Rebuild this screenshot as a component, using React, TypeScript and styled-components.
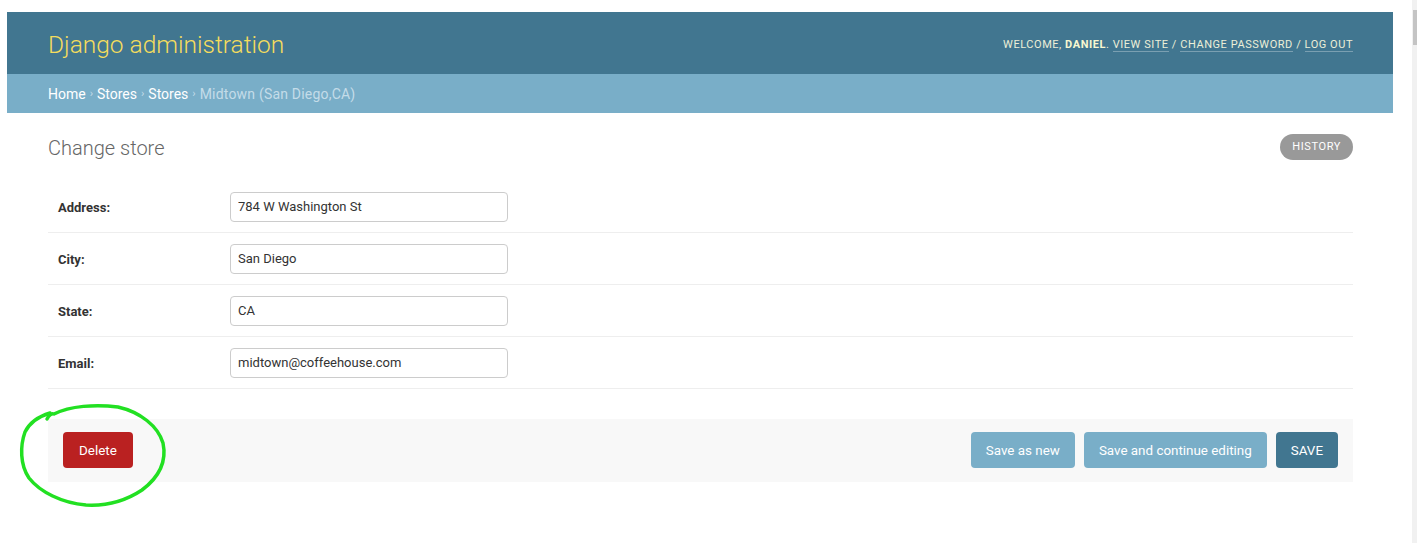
import React from "react";
import styled, { createGlobalStyle } from "styled-components";

const Global = createGlobalStyle`
  html, body { margin: 0; padding: 0; background: #fff; }
  body { font-family: Roboto, "Liberation Sans", Arial, sans-serif; color: #333; }
  * { box-sizing: border-box; }
`;

const Root = styled.div`
  position: relative;
  display: flex;
  width: 1417px;
  height: 543px;
  overflow: hidden;
  background: #fff;
`;

const Page = styled.div`
  width: 1386px;
  margin: 12px 0 0 7px;
  display: flex;
  flex-direction: column;
`;

const Spacer = styled.div`
  flex: 1;
`;

const ScrollTrack = styled.div`
  width: 5px;
  height: 100%;
  background: #f1f1f1;
  display: flex;
  flex-direction: column;
  align-items: flex-end;
  padding-top: 10px;
`;

const ScrollThumb = styled.div`
  width: 4px;
  height: 35px;
  background: #c4c4c4;
`;

const Header = styled.header`
  height: 62px;
  background: #417690;
  display: flex;
  align-items: center;
  justify-content: space-between;
  padding: 0 40px 0 41px;
`;

const Branding = styled.h1`
  margin: 0;
  font-size: 24.5px;
  font-weight: 300;
  color: #f5dd5d;
  padding-top: 2px;
`;

const UserTools = styled.div`
  font-size: 11px;
  letter-spacing: 0.55px;
  text-transform: uppercase;
  color: #ecefd8;
  padding-top: 2px;
`;

const UserName = styled.strong`
  font-weight: 700;
  color: #f8f8d0;
`;

const ToolLink = styled.a`
  color: #ecefd8;
  text-decoration: none;
  border-bottom: 1px solid rgba(255, 255, 255, 0.3);
`;

const Breadcrumbs = styled.nav`
  height: 39px;
  background: #79aec8;
  display: flex;
  align-items: center;
  padding: 0 41px;
  font-size: 14px;
  color: #c4dce8;
`;

const Crumb = styled.a`
  color: #fff;
  text-decoration: none;
`;

const Sep = styled.span`
  color: #c4dce8;
  margin: 0 4px;
  font-size: 11px;
`;

const Current = styled.span`
  color: #c4dce8;
  letter-spacing: 0.2px;
`;

const Content = styled.main`
  padding: 22px 40px 0 41px;
  display: flex;
  flex-direction: column;
`;

const TitleRow = styled.div`
  display: flex;
  justify-content: space-between;
  align-items: flex-start;
  margin-bottom: 20px;
`;

const Title = styled.h2`
  margin: 0;
  font-size: 20px;
  font-weight: 300;
  color: #666;
  line-height: 26px;
`;

const HistoryButton = styled.a`
  display: inline-block;
  height: 26px;
  line-height: 26px;
  padding: 0 12px;
  border-radius: 15px;
  background: #999;
  color: #fff;
  font-size: 11px;
  font-weight: 400;
  letter-spacing: 0.6px;
  text-transform: uppercase;
  margin-top: -1px;
`;

const Fieldset = styled.div`
  display: flex;
  flex-direction: column;
`;

const FormRow = styled.div`
  display: flex;
  align-items: center;
  height: 52px;
  padding: 0 10px;
  border-bottom: 1px solid #eee;
`;

const Label = styled.label`
  width: 172px;
  font-size: 13px;
  font-weight: 700;
  color: #333;
  padding-top: 1px;
`;

const Input = styled.input`
  width: 278px;
  height: 30px;
  padding: 5px 7px;
  border: 1px solid #ccc;
  border-radius: 4px;
  font-family: Roboto, "Liberation Sans", Arial, sans-serif;
  font-size: 13px;
  color: #333;
  background: #fff;
  outline: none;
`;

const SubmitRow = styled.div`
  margin-top: 30px;
  height: 63px;
  background: #f8f8f8;
  display: flex;
  align-items: center;
  padding: 0 15px;
  gap: 9px;
`;

const Button = styled.button<{ $variant: "delete" | "secondary" | "primary" }>`
  height: 36px;
  padding: 0 ${(p) => (p.$variant === "delete" ? "16px" : "15px")};
  border: none;
  border-radius: 4px;
  font-family: Roboto, "Liberation Sans", Arial, sans-serif;
  font-size: 13.4px;
  color: #fff;
  cursor: pointer;
  background: ${(p) =>
    p.$variant === "delete" ? "#ba2121" : p.$variant === "primary" ? "#417690" : "#79aec8"};
  text-transform: ${(p) => (p.$variant === "primary" ? "uppercase" : "none")};
  margin-right: ${(p) => (p.$variant === "delete" ? "auto" : "0")};
  margin-top: -1px;
`;

const Annotation = styled.svg`
  position: absolute;
  left: 0;
  top: 0;
  pointer-events: none;
`;

const fields = [
  { label: "Address:", value: "784 W Washington St" },
  { label: "City:", value: "San Diego" },
  { label: "State:", value: "CA" },
  { label: "Email:", value: "midtown@coffeehouse.com" },
];

export default function App() {
  return (
    <>
      <Global />
      <Root>
        <Page>
          <Header>
            <Branding>Django administration</Branding>
            <UserTools>
              Welcome, <UserName>Daniel</UserName>. <ToolLink>View site</ToolLink> /{" "}
              <ToolLink>Change password</ToolLink> / <ToolLink>Log out</ToolLink>
            </UserTools>
          </Header>
          <Breadcrumbs>
            <Crumb>Home</Crumb>
            <Sep>›</Sep>
            <Crumb>Stores</Crumb>
            <Sep>›</Sep>
            <Crumb>Stores</Crumb>
            <Sep>›</Sep>
            <Current>Midtown (San Diego,CA)</Current>
          </Breadcrumbs>
          <Content>
            <TitleRow>
              <Title>Change store</Title>
              <HistoryButton>History</HistoryButton>
            </TitleRow>
            <Fieldset>
              {fields.map((f) => (
                <FormRow key={f.label}>
                  <Label>{f.label}</Label>
                  <Input defaultValue={f.value} />
                </FormRow>
              ))}
            </Fieldset>
            <SubmitRow>
              <Button $variant="delete">Delete</Button>
              <Button $variant="secondary">Save as new</Button>
              <Button $variant="secondary">Save and continue editing</Button>
              <Button $variant="primary">Save</Button>
            </SubmitRow>
          </Content>
        </Page>
        <Spacer />
        <ScrollTrack>
          <ScrollThumb />
        </ScrollTrack>
        <Annotation width="1417" height="543" viewBox="0 0 1417 543">
          <path
            d="M47 419 C 49 415, 52 413, 54 414 C 70 406, 95 404, 118 407 C 140 412, 158 426, 163 443 C 167 462, 158 478, 142 490 C 124 502, 104 506, 86 505 C 62 503, 40 492, 29 478 C 20 465, 20 446, 25 432 C 30 422, 40 416, 50 413"
            fill="none"
            stroke="#22e022"
            strokeWidth="3.5"
            strokeLinecap="round"
            strokeLinejoin="round"
          />
        </Annotation>
      </Root>
    </>
  );
}
